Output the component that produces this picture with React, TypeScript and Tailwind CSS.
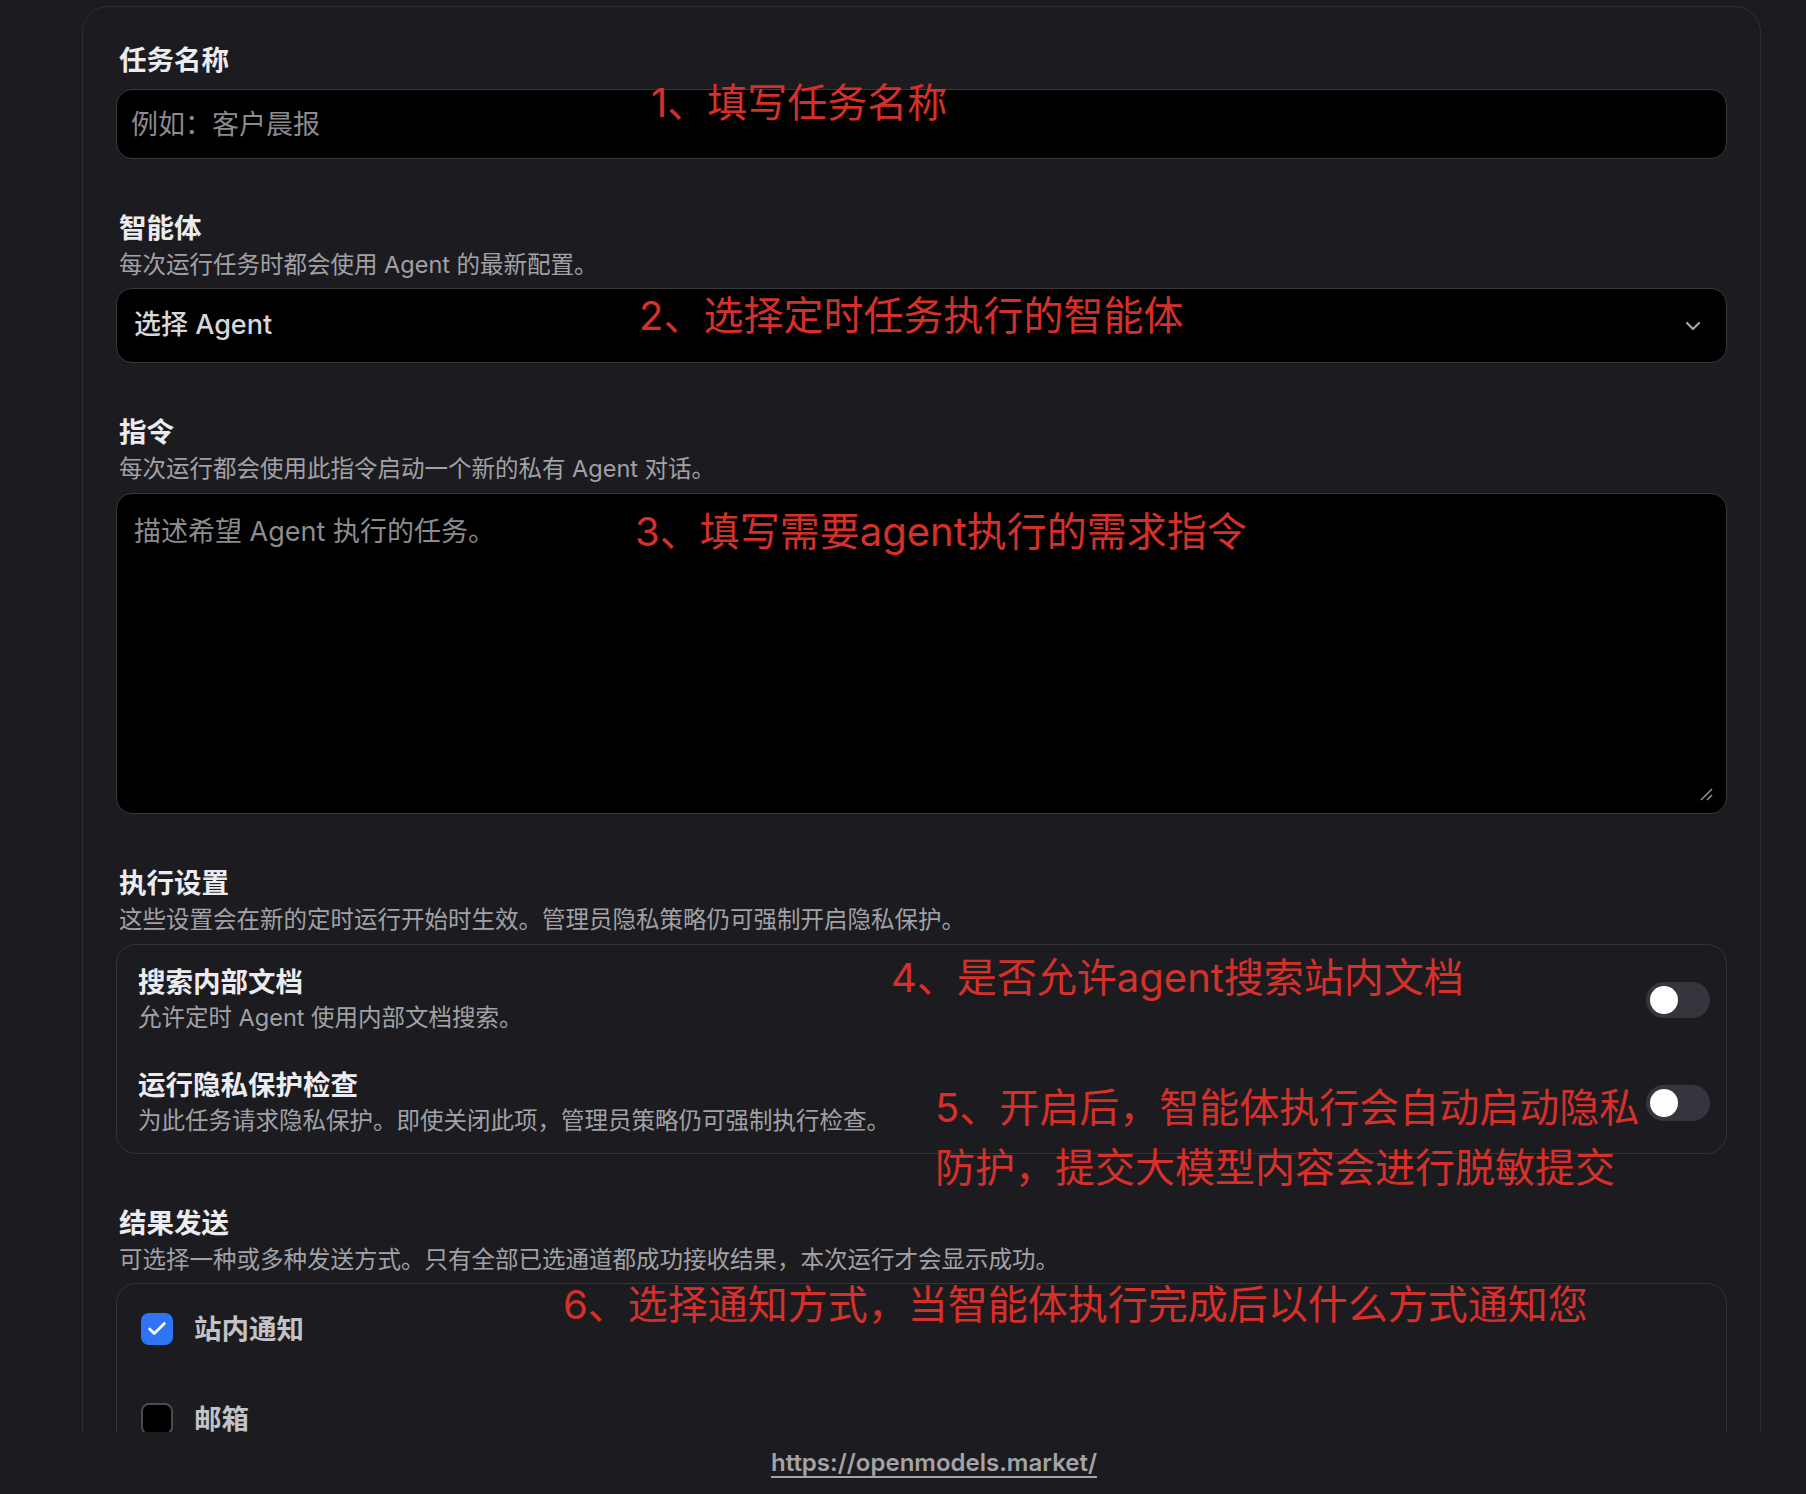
import { Check } from "lucide-react"

const font = "font-['Inter','Noto_Sans_CJK_SC',sans-serif]"

function FieldLabel({ title, desc }: { title: string; desc?: string }) {
  return (
    <div className="pl-[3px]">
      <div className="text-[27.5px] leading-[34px] font-semibold text-[#ececf0]">{title}</div>
      {desc && <div className="mt-[4px] text-[23.5px] leading-[32px] text-[#a1a1a6]">{desc}</div>}
    </div>
  )
}

function Toggle() {
  return (
    <div className="w-[64px] h-[36px] rounded-full bg-[#35353d] flex items-center px-[4px] shrink-0">
      <div className="w-[28px] h-[28px] rounded-full bg-white" />
    </div>
  )
}

function Note({ children, className }: { children: React.ReactNode; className: string }) {
  return (
    <div className={`absolute text-[40px] leading-[60px] text-[#d5302a] whitespace-nowrap ${className}`}>
      {children}
    </div>
  )
}

export default function App() {
  return (
    <div className={`w-[1806px] h-[1494px] bg-[#1c1c20] overflow-hidden ${font}`}>
      <div className="h-[1432px] overflow-hidden pt-[6px]">
        <div className="relative ml-[82px] w-[1679px] rounded-[26px] border border-[#2e2e33] bg-[#1c1c20] pl-[33px] pr-[33px] pt-[36px] pb-[60px]">
          <div className="flex flex-col gap-[52px]">
            {/* 任务名称 */}
            <div>
              <FieldLabel title="任务名称" />
              <input
                className="mt-[12px] w-full h-[70px] rounded-[16px] border border-[#38383d] bg-black px-[14px] text-[27px] text-[#e5e5ea] placeholder:text-[#8b8b90] outline-none"
                placeholder="例如：客户晨报"
              />
            </div>

            {/* 智能体 */}
            <div>
              <FieldLabel title="智能体" desc="每次运行任务时都会使用 Agent 的最新配置。" />
              <div className="mt-[7px] h-[75px] rounded-[16px] border border-[#38383d] bg-black flex items-center justify-between pl-[17px] pr-[25px]">
                <span className="text-[27px] font-medium text-[#d6d6db]">选择 Agent</span>
                <svg width="16" height="10" viewBox="0 0 16 10" fill="none">
                  <polyline points="2,2 8,8 14,2" stroke="#a5a5aa" strokeWidth="2.2" strokeLinecap="round" strokeLinejoin="round" />
                </svg>
              </div>
            </div>

            {/* 指令 */}
            <div>
              <FieldLabel title="指令" desc="每次运行都会使用此指令启动一个新的私有 Agent 对话。" />
              <div className="relative mt-[8px]">
                <textarea
                  className="block w-full h-[321px] resize-none rounded-[16px] border border-[#38383d] bg-black px-[17px] pt-[18px] text-[27px] leading-[40px] text-[#e5e5ea] placeholder:text-[#8b8b90] outline-none"
                  placeholder="描述希望 Agent 执行的任务。"
                />
                <svg className="absolute right-[14px] bottom-[13px]" width="13" height="13" viewBox="0 0 13 13">
                  <line x1="1" y1="12" x2="12" y2="1" stroke="#8e8e93" strokeWidth="1.6" />
                  <line x1="7" y1="12" x2="12" y2="7" stroke="#8e8e93" strokeWidth="1.6" />
                </svg>
              </div>
            </div>

            {/* 执行设置 */}
            <div>
              <FieldLabel title="执行设置" desc="这些设置会在新的定时运行开始时生效。管理员隐私策略仍可强制开启隐私保护。" />
              <div className="mt-[8px] rounded-[20px] border border-[#333338] pl-[21px] pr-[16px] pt-[20px] pb-[16px] flex flex-col gap-[34px]">
                <div className="flex items-center justify-between">
                  <div>
                    <div className="text-[27.5px] leading-[34px] font-semibold text-[#ececf0]">搜索内部文档</div>
                    <div className="mt-[3px] text-[23.5px] leading-[32px] text-[#a1a1a6]">允许定时 Agent 使用内部文档搜索。</div>
                  </div>
                  <Toggle />
                </div>
                <div className="flex items-center justify-between">
                  <div>
                    <div className="text-[27.5px] leading-[34px] font-semibold text-[#ececf0]">运行隐私保护检查</div>
                    <div className="mt-[3px] text-[23.5px] leading-[32px] text-[#a1a1a6]">
                      为此任务请求隐私保护。即使关闭此项，管理员策略仍可强制执行检查。
                    </div>
                  </div>
                  <Toggle />
                </div>
              </div>
            </div>

            {/* 结果发送 */}
            <div>
              <FieldLabel title="结果发送" desc="可选择一种或多种发送方式。只有全部已选通道都成功接收结果，本次运行才会显示成功。" />
              <div className="mt-[7px] rounded-[20px] border border-[#333338] pl-[24px] pt-[28px] pb-[40px] flex flex-col gap-[56px]">
                <div className="flex items-center gap-[21px]">
                  <div className="w-[32px] h-[32px] rounded-[8px] bg-[#2f74f6] flex items-center justify-center">
                    <Check size={22} strokeWidth={3} className="text-white" />
                  </div>
                  <span className="text-[27.5px] leading-[34px] font-semibold text-[#c2c2c7]">站内通知</span>
                </div>
                <div className="flex items-center gap-[21px]">
                  <div className="w-[32px] h-[32px] rounded-[8px] bg-black border-2 border-[#4a4a4f]" />
                  <span className="text-[27.5px] leading-[34px] font-semibold text-[#c2c2c7]">邮箱</span>
                </div>
              </div>
            </div>
          </div>

          <Note className="left-[568px] top-[66px]">1、填写任务名称</Note>
          <Note className="left-[556px] top-[279px]">2、选择定时任务执行的智能体</Note>
          <Note className="left-[552px] top-[495px]">3、填写需要agent执行的需求指令</Note>
          <Note className="left-[808px] top-[941px]">4、是否允许agent搜索站内文档</Note>
          <Note className="left-[852px] top-[1071px]">
            5、开启后，智能体执行会自动启动隐私
            <br />
            防护，提交大模型内容会进行脱敏提交
          </Note>
          <Note className="left-[480px] top-[1268px]">6、选择通知方式，当智能体执行完成后以什么方式通知您</Note>
        </div>
      </div>
      <div className="h-[62px] flex items-center justify-center pl-[62px]">
        <a className="text-[24px] font-semibold text-[#a3a3a8] underline underline-offset-[5px]" href="#">
          https://openmodels.market/
        </a>
      </div>
    </div>
  )
}
